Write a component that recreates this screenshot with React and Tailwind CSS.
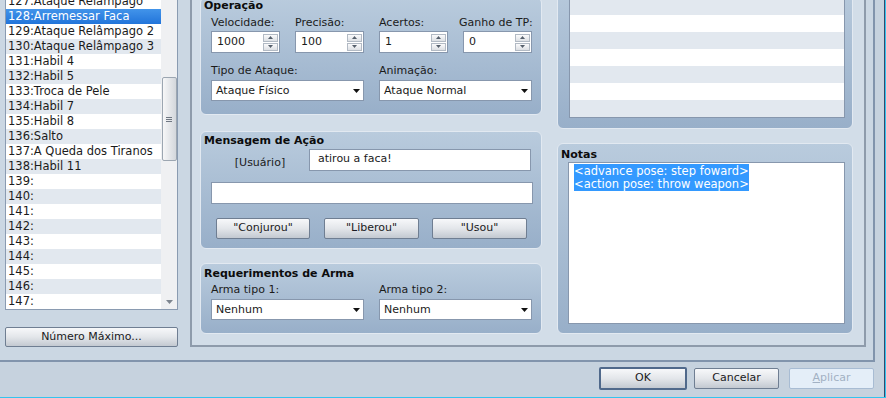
import React from "react";

const skills = [
  [127, "Ataque Relâmpago"],
  [128, "Arremessar Faca"],
  [129, "Ataque Relâmpago 2"],
  [130, "Ataque Relâmpago 3"],
  [131, "Habil 4"],
  [132, "Habil 5"],
  [133, "Troca de Pele"],
  [134, "Habil 7"],
  [135, "Habil 8"],
  [136, "Salto"],
  [137, "A Queda dos Tiranos"],
  [138, "Habil 11"],
  [139, ""],
  [140, ""],
  [141, ""],
  [142, ""],
  [143, ""],
  [144, ""],
  [145, ""],
  [146, ""],
  [147, ""],
];

function GroupBox({ title, className, titleClass, children }) {
  return (
    <div
      className={
        "flex flex-col rounded-[6px] border border-[#e2e9f1] bg-linear-to-b from-[#b9cbdd] to-[#98afc9] " +
        className
      }
    >
      {title && (
        <div className={"pl-[3px] h-[14px] leading-[14px] font-bold text-[#0c0c0c] " + titleClass}>
          {title}
        </div>
      )}
      {children}
    </div>
  );
}

function Arrow({ up, className }) {
  return (
    <svg width="7" height="4" viewBox="0 0 7 4" className={className}>
      {up ? <path d="M0 4 L3.5 0 L7 4 Z" fill="currentColor" /> : <path d="M0 0 L7 0 L3.5 4 Z" fill="currentColor" />}
    </svg>
  );
}

function Spin({ value }) {
  return (
    <div className="w-[69px] h-[22px] bg-white border border-[#8797ad] flex items-center">
      <span className="flex-1 pl-[5px] leading-[20px]">{value}</span>
      <div className="flex flex-col gap-[1px] mr-[1px]">
        <div className="w-[15px] h-[8px] border border-[#b2bac4] bg-linear-to-b from-[#fbfbfc] to-[#dde0e4] flex items-center justify-center text-[#56606c]">
          <Arrow up className="w-[5px] h-[3px]" />
        </div>
        <div className="w-[15px] h-[8px] border border-[#b2bac4] bg-linear-to-b from-[#fbfbfc] to-[#dde0e4] flex items-center justify-center text-[#56606c]">
          <Arrow className="w-[5px] h-[3px]" />
        </div>
      </div>
    </div>
  );
}

function Combo({ value }) {
  return (
    <div className="w-[153px] h-[21px] bg-white border border-[#8797ad] flex items-center pl-[4px] pr-[3px]">
      <span className="flex-1 leading-[19px]">{value}</span>
      <Arrow className="text-[#111] mt-[1px]" />
    </div>
  );
}

function Btn({ children, className }) {
  return (
    <div
      className={
        "flex items-center justify-center rounded-[2px] border border-[#6f7e92] bg-linear-to-b from-[#f7f8fa] via-[#e3e6ea] to-[#c3c9d1] text-[#1a1a22] " +
        className
      }
    >
      {children}
    </div>
  );
}

export default function App() {
  return (
    <div className="w-[886px] h-[398px] overflow-hidden border-r border-b border-[#33c4ee] bg-[#c6d2de] font-['DejaVu_Sans',sans-serif] text-[11px] text-[#1b1b1b]">
      <div className="h-full border-r border-[#33496c] flex flex-col">
        {/* tab page */}
        <div className="w-[875px] h-[362px] shrink-0 bg-[#cbd7e3] border-r-2 border-b-2 border-[#8194ac] flex">
          {/* left list */}
          <div className="ml-[5px] w-[173px] flex flex-col">
            <div className="h-[310px] bg-white border-x border-b border-[#8a9bb1] flex overflow-hidden">
              <div className="flex-1 -mt-[6px] text-[11.5px]">
                {skills.map(([n, name]) => (
                  <div
                    key={n}
                    className={
                      "h-[15px] leading-[15px] pl-[2px] whitespace-nowrap " +
                      (n === 128
                        ? "bg-linear-to-b from-[#4294ea] to-[#2174da] text-white"
                        : n % 2 === 0
                        ? "bg-[#e2e8ef]"
                        : "bg-white")
                    }
                  >
                    {n}:{name}
                  </div>
                ))}
              </div>
              <div className="w-[16px] bg-[#eff0f2] flex flex-col items-center">
                <div className="mt-[77px] w-[15px] h-[84px] rounded-[2px] border border-[#9ca6b1] bg-linear-to-r from-[#f7f7f8] to-[#d3d7dc] flex flex-col items-center justify-center gap-[1px]">
                  <div className="w-[6px] h-[1px] bg-[#6f7782]" />
                  <div className="w-[6px] h-[1px] bg-[#6f7782]" />
                  <div className="w-[6px] h-[1px] bg-[#6f7782]" />
                </div>
                <div className="flex-1" />
                <Arrow className="text-[#7d858f] mb-[5px]" />
              </div>
            </div>
            <Btn className="mt-[17px] h-[20px]">Número Máximo...</Btn>
          </div>

          {/* main container */}
          <div className="ml-[12px] w-[676px] h-[347px] bg-[#d2dde8] border-l-2 border-r-2 border-b-2 border-[#8e9bab] flex pl-[8px] pr-[11px] gap-[15px]">
            {/* left column */}
            <div className="w-[342px] flex flex-col">
              <GroupBox title="Operação" className="-mt-[3px] h-[118px]" titleClass="mt-[1px]">
                <div className="pl-[10px] mt-[3px] grid grid-cols-[84px_84px_84px_84px] h-[14px] leading-[14px]">
                  <span>Velocidade:</span>
                  <span>Precisão:</span>
                  <span>Acertos:</span>
                  <span className="-ml-[4px] whitespace-nowrap">Ganho de TP:</span>
                </div>
                <div className="pl-[10px] mt-[1px] grid grid-cols-[84px_84px_84px_84px]">
                  <Spin value="1000" />
                  <Spin value="100" />
                  <Spin value="1" />
                  <Spin value="0" />
                </div>
                <div className="pl-[10px] mt-[11px] grid grid-cols-[168px_168px] h-[14px] leading-[14px]">
                  <span>Tipo de Ataque:</span>
                  <span>Animação:</span>
                </div>
                <div className="pl-[10px] mt-[2px] grid grid-cols-[168px_168px]">
                  <Combo value="Ataque Físico" />
                  <Combo value="Ataque Normal" />
                </div>
              </GroupBox>

              <GroupBox title="Mensagem de Ação" className="mt-[16px] h-[118px]" titleClass="mt-[2px]">
                <div className="pl-[10px] mt-[1px] flex">
                  <div className="w-[98px] text-center pt-[7px] leading-[14px]">[Usuário]</div>
                  <div className="w-[222px] h-[22px] bg-white border border-[#8797ad] pl-[8px] leading-[18px]">
                    atirou a faca!
                  </div>
                </div>
                <div className="ml-[10px] mt-[11px] w-[322px] h-[22px] bg-white border border-[#8797ad]" />
                <div className="pl-[15px] mt-[14px] flex">
                  <Btn className="w-[94px] h-[21px]">"Conjurou"</Btn>
                  <Btn className="ml-[14px] w-[95px] h-[21px]">"Liberou"</Btn>
                  <Btn className="ml-[13px] w-[95px] h-[21px]">"Usou"</Btn>
                </div>
              </GroupBox>

              <GroupBox title="Requerimentos de Arma" className="mt-[14px] h-[71px]" titleClass="mt-[3px]">
                <div className="pl-[10px] mt-[2px] grid grid-cols-[168px_168px] h-[14px] leading-[14px]">
                  <span>Arma tipo 1:</span>
                  <span>Arma tipo 2:</span>
                </div>
                <div className="pl-[10px] mt-[2px] grid grid-cols-[168px_168px]">
                  <Combo value="Nenhum" />
                  <Combo value="Nenhum" />
                </div>
              </GroupBox>
            </div>

            {/* right column */}
            <div className="w-[296px] flex flex-col">
              <GroupBox className="-mt-[20px] h-[149px] pl-[11px] pr-[7px] pb-[10px]">
                <div className="flex-1 bg-white border-x border-b border-[#8797ad] overflow-hidden">
                  {[0, 1, 2, 3, 4, 5, 6, 7, 8].map((i) => (
                    <div key={i} className={"h-[17px] " + (i % 2 === 1 ? "bg-[#e2e8ef]" : "bg-white")} />
                  ))}
                </div>
              </GroupBox>

              <GroupBox title="Notas" className="mt-[14px] h-[191px] pb-[9px]" titleClass="mt-[4px]">
                <div className="ml-[10px] w-[277px] flex-1 bg-white border border-[#8797ad] pl-[5px] pt-[2px] text-[11.5px] leading-[13px]">
                  <div>
                    <span className="bg-[#3399ff] text-white">&lt;advance pose: step foward&gt;</span>
                  </div>
                  <div>
                    <span className="bg-[#3399ff] text-white">&lt;action pose: throw weapon&gt;</span>
                  </div>
                </div>
              </GroupBox>
            </div>
          </div>
        </div>

        {/* dialog buttons */}
        <div className="flex-1 flex justify-end items-start pt-[5px] pr-[10px]">
          <Btn className="w-[88px] h-[23px] border-2 border-[#50698b]">OK</Btn>
          <Btn className="ml-[7px] mt-[1px] w-[85px] h-[21px]">Cancelar</Btn>
          <div className="ml-[10px] mt-[1px] w-[85px] h-[21px] rounded-[2px] border border-[#a8bcd3] bg-[#e4eef8] text-[#a2b1c3] flex items-center justify-center">
            <span>
              <span className="underline">A</span>plicar
            </span>
          </div>
        </div>
      </div>
    </div>
  );
}
